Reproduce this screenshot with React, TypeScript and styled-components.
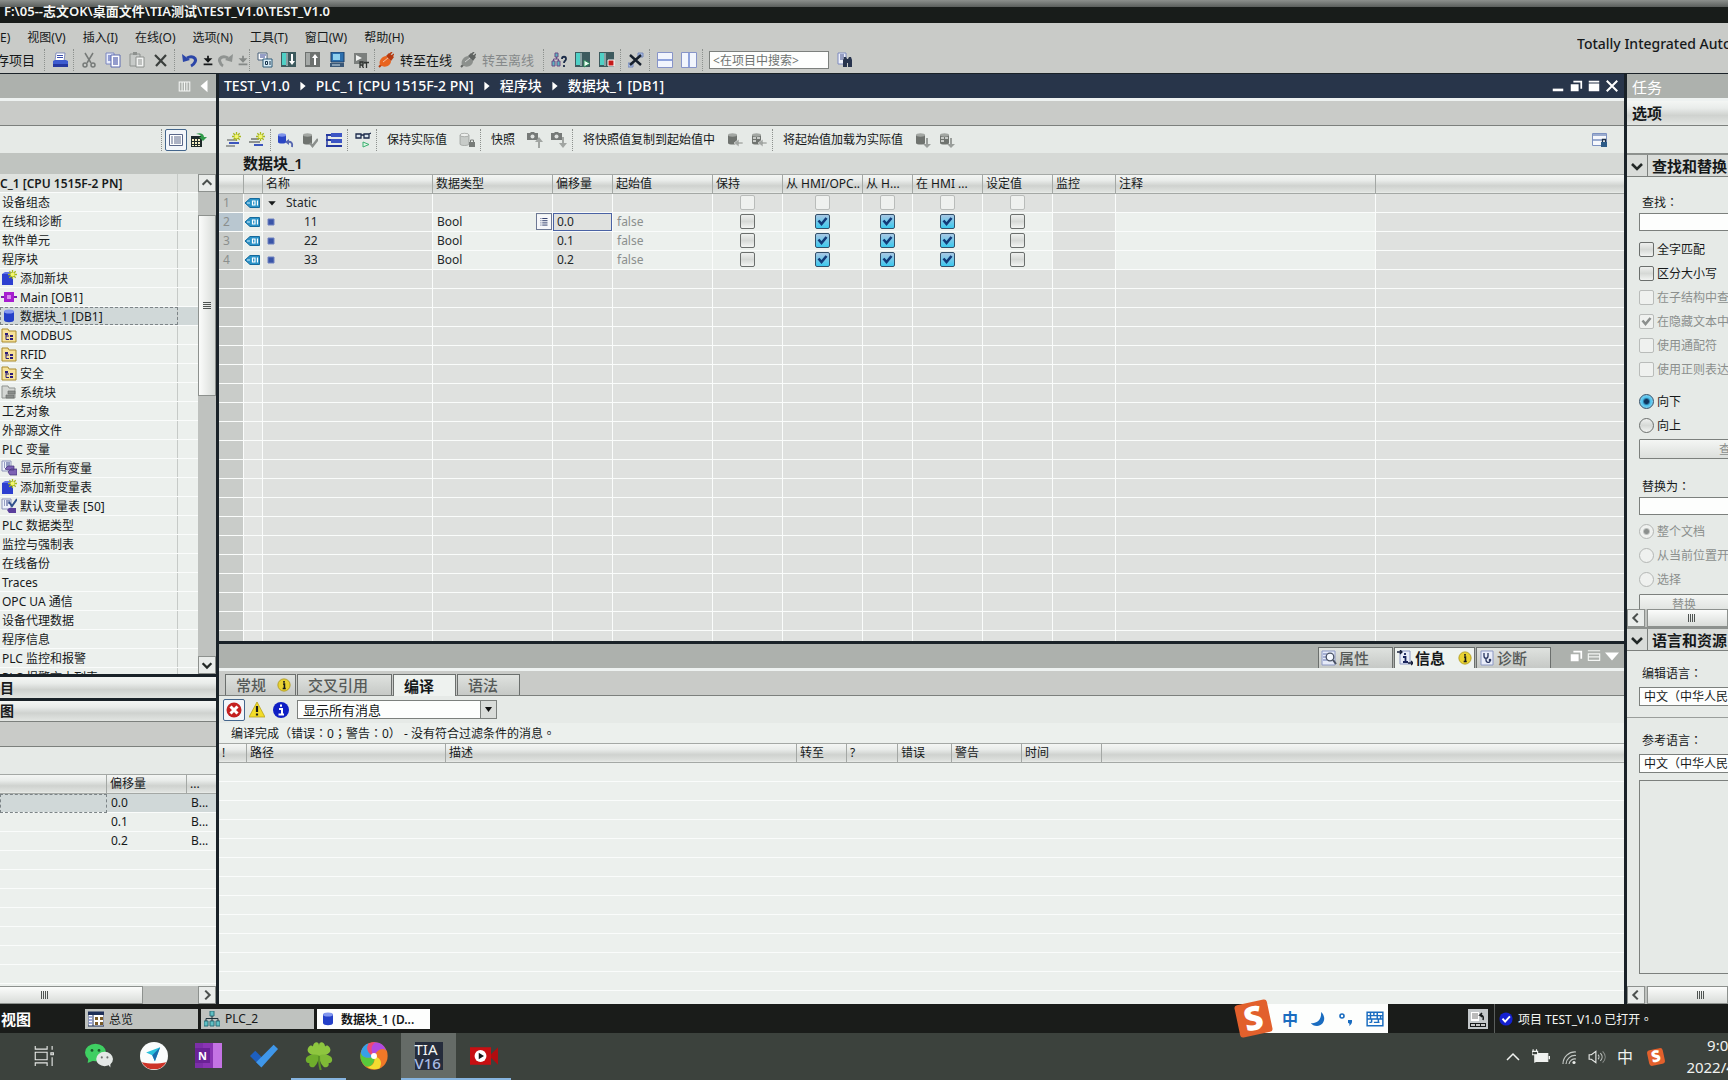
import React from "react";
import styled, { createGlobalStyle, css } from "styled-components";

const GlobalStyle = createGlobalStyle`
  *, *::before, *::after { box-sizing: border-box; }
  html, body { margin: 0; height: 100%; overflow: hidden; }
  body, button, input, select {
    font-family: "Noto Sans", "Noto Sans CJK SC", sans-serif;
    font-size: 12px;
    color: #16191a;
  }
  button { border: 0; padding: 0; margin: 0; background: none; cursor: pointer; }
  #root { height: 100%; }
`;

const ink = "#1a2228";
const line = "#7c807d";
const glossy = "linear-gradient(#f4f6f4, #e9ecea 30%, #cfd2cf 60%, #e2e5e2)";
const tick = (color: string) =>
  `url("data:image/svg+xml,%3Csvg xmlns='http://www.w3.org/2000/svg' viewBox='0 0 13 13'%3E%3Cpath d='M2.5 5.5l3 3.5 5-6' fill='none' stroke='%23${color}' stroke-width='2.6'/%3E%3C/svg%3E")`;

/* ---------- icons ---------- */

const disk = (fill: string, top: string) => (
  <>
    <path d="M3 3v9c0 3 10 3 10 0V3z" fill={fill} />
    <ellipse cx="8" cy="3.4" rx="5" ry="2" fill={top} />
  </>
);
const smallDisk = (
  <>
    <path d="M1 3v8c0 2 9 2 9 0V3z" fill="#6f736f" />
    <ellipse cx="5.500" cy="3" rx="4.500" ry="1.700" fill="#a3a7a3" />
  </>
);
const spark = (
  <path d="M11.500 0v9M7 4.500h9M8.300 1.300l6.400 6.400M14.700 1.300L8.300 7.700" stroke="#a9b81c" strokeWidth="1.300" />
);
const sparkCore = <circle cx="11.500" cy="4.500" r="2" fill="#f3f76b" />;
const folder = (
  <>
    <path d="M1 2h6l1 2h7v11H1z" fill="#f6e29a" stroke="#a98a2c" />
    <path d="M4 6h3v2H4zM9 8h3v2H9zM9 11h3v2H9z" fill="#2a1d7a" />
    <path d="M5 8v4.500h3M5 9h3" stroke="#2a1d7a" fill="none" />
  </>
);
const tagTable = (
  <>
    <path d="M1 1h9v10H1z" fill="#eef2fb" stroke="#8b93b8" />
    <path d="M3 3h1M5 3h4M3 5h1M5 5h4M3 7h1M5 7h2" stroke="#3c4a8a" />
  </>
);
const screenIcon = (
  <>
    <path d="M0 0h15v15H0z" fill="#3d5a5e" />
    <path d="M1 1h4v12H1z" fill="#4fd0c6" />
    <path d="M6 1v13" stroke="#d7e6e6" />
  </>
);
const plug = (a: string, b: string) => (
  <>
    <path d="M1 15l3-3" stroke={b} strokeWidth="2" />
    <path d="M2 13C0 8 5 4 8 4l5 5c0 4-5 7-9 5z" fill={a} />
    <path d="M8 4l3-3 5 4-3 4z" fill={b} />
    <path d="M11 3l3-3M13 5l3-3" stroke={b} strokeWidth="1.500" />
    <path d="M5 10l5-4" stroke="#fff" strokeOpacity=".6" />
  </>
);

const glyphs: Record<string, React.ReactNode> = {
  printer: (
    <>
      <path d="M4 1h9l-1 8H3z" fill="#fff" stroke="#6b78b5" strokeWidth=".8" />
      <path d="M5 3.500h6M5 5.500h6" stroke="#3b4fae" />
      <path d="M1 9l2-1h11l2 1v5H1z" fill="#3d5bd0" />
      <path d="M1 12h15v3H1z" fill="#2437a0" />
    </>
  ),
  cut: (
    <>
      <path d="M4 1l6 10M12 1L6 11" stroke="#767a78" strokeWidth="1.500" />
      <circle cx="4" cy="13" r="2" fill="none" stroke="#767a78" strokeWidth="1.500" />
      <circle cx="12" cy="13" r="2" fill="none" stroke="#767a78" strokeWidth="1.500" />
    </>
  ),
  copy: (
    <>
      <path d="M1 1h8v11H1z" fill="#e8ecfa" stroke="#7a86c0" />
      <path d="M3 4h4M3 6h4M3 8h4" stroke="#3b4fae" />
      <path d="M6 3h9v12H6z" fill="#fff" stroke="#5c6bb0" />
      <path d="M8 6h5M8 8h5M8 10h5M8 12h5" stroke="#28389a" />
    </>
  ),
  paste: (
    <>
      <path d="M1 2h10v12H1z" fill="#c7cac8" stroke="#8d918e" />
      <path d="M4 0h4v3H4z" fill="#8d918e" />
      <path d="M7 5h8v10H7z" fill="#f2f3f2" stroke="#8d918e" />
      <path d="M9 8h4M9 10h4M9 12h4" stroke="#8d918e" />
    </>
  ),
  remove: <path d="M2 3l11 11M13 3L3 14" stroke="#3b3f3d" strokeWidth="2.200" />,
  undo: (
    <>
      <path d="M5 6c5-3 10 0 8 4-.8 2-2 3-4 4" fill="none" stroke="#2c46a8" strokeWidth="3" />
      <path d="M0 2l1 8 7-2z" fill="#2c46a8" />
    </>
  ),
  redo: (
    <>
      <path d="M11 6C6 3 1 6 3 10c.5 2 1 3 3 4" fill="none" stroke="#8f9391" strokeWidth="3" />
      <path d="M16 2l-1 8-7-2z" fill="#8f9391" />
    </>
  ),
  drop: <path d="M7 3h2v3h4l-5 5-5-5h4zM3 12h10v2H3z" fill="#16191a" />,
  dropOff: <path d="M7 3h2v3h4l-5 5-5-5h4zM3 12h10v2H3z" fill="#858987" />,
  compile: (
    <>
      <path d="M1 1h9v7H1z" fill="#fff" stroke="#49617a" />
      <path d="M3 3h6M3 5h5" stroke="#2c3f8c" />
      <path d="M6 7h9v8H6z" fill="#d8ecf6" stroke="#2c5a78" />
      <path d="M8.500 9.500h2v3h-2zM13 9v4" stroke="#16324a" fill="none" />
    </>
  ),
  download: (
    <>
      {screenIcon}
      <path d="M11 2v8" stroke="#fff" strokeWidth="2" />
      <path d="M8 9h6l-3 4z" fill="#fff" />
    </>
  ),
  upload: (
    <>
      <path d="M0 0h15v15H0z" fill="#6d716f" />
      <path d="M1 1h4v12H1z" fill="#a5a9a7" />
      <path d="M10 5v8" stroke="#fff" strokeWidth="2" />
      <path d="M7 6h6l-3-4z" fill="#fff" />
    </>
  ),
  monitor: (
    <>
      <path d="M2 0h13v10H2z" fill="#2c6fae" stroke="#1d3f66" />
      <path d="M4 2h7v6H4z" fill="#8fd0ee" />
      <path d="M1 11h14v4H1z" fill="#3a5878" />
      <path d="M3 13h8" stroke="#cfe2ee" />
    </>
  ),
  runtime: (
    <>
      <path d="M1 1h13v11H1z" fill="#7b7f7d" />
      <path d="M3 3l6 3-6 3z" fill="#f0f2f1" />
      <path d="M7 16V10h3v3H7.500M9 13l1.500 3M11 10.500h5M13.500 10v6" stroke="#2f3331" strokeWidth="1.300" fill="none" />
    </>
  ),
  online: plug("#e8641f", "#b53a10"),
  offline: plug("#8c908d", "#5f6361"),
  devices: (
    <>
      <path d="M4 1h3v4H4zM1 9h3v5H1zM6 9h3v5H6z" fill="#5ab5c0" stroke="#6a4a86" />
      <path d="M5.500 5v2M2.500 9V7h5v2" stroke="#6a4a86" fill="none" />
      <path d="M11 7c0-3 4-3 4 0 0 2-2 1.500-2 4M13 13v2" stroke="#1b2b48" strokeWidth="1.800" fill="none" />
    </>
  ),
  start: (
    <>
      {screenIcon}
      <path d="M9 8l6 3.500L9 15z" fill="#eafaf0" stroke="#2c8a58" />
    </>
  ),
  stop: (
    <>
      {screenIcon}
      <path d="M9 8h6v6H9z" fill="#c41a1a" stroke="#fff" />
    </>
  ),
  crossRef: (
    <>
      <path d="M10 1h5v4h-5zM0 11h5v4H0z" fill="#a9bbe4" stroke="#7789b8" />
      <path d="M2 3l11 10M13 3L2 13" stroke="#17202c" strokeWidth="2.400" />
    </>
  ),
  splitH: (
    <>
      <path d="M.5.500h15v15H.5z" fill="#f2f5fd" stroke="#8794c8" />
      <path d="M1 7h14v2H1z" fill="#8fa3dc" />
    </>
  ),
  splitV: (
    <>
      <path d="M.5.500h15v15H.5z" fill="#f2f5fd" stroke="#8794c8" />
      <path d="M7 1h2v14H7z" fill="#8fa3dc" />
    </>
  ),
  find: (
    <>
      <path d="M1 1h8v11H1z" fill="#eef1fb" stroke="#7d8abf" />
      <path d="M3 3h4M3 5h4M3 7h3" stroke="#3c4a8a" />
      <path d="M6 8l1-3h2l1 2h1l1-2h2l1 3v7h-4v-4h-1v4H6z" fill="#28344e" />
    </>
  ),
  addRow: (
    <>
      <path d="M2 7h9v2H2zM1 13h9v2H1z" fill="#9a9e9c" />
      <path d="M4 10h10v2H4z" fill="#3c55bd" />
      {spark}
      {sparkCore}
    </>
  ),
  insertRow: (
    <>
      <path d="M2 6h8v2H2zM0 9h11v2H0z" fill="#8d918f" />
      <path d="M5 12h9v2H5z" fill="#3c55bd" />
      {spark}
      {sparkCore}
    </>
  ),
  resetDb: (
    <>
      <path d="M0 3v7c0 2 8 2 8 0V3z" fill="#2b46c4" />
      <ellipse cx="4" cy="3" rx="4" ry="1.700" fill="#7d92ea" />
      <path d="M9 10c4-1 6 1 5 5" fill="none" stroke="#5767b0" strokeWidth="2" />
      <path d="M7 10l4-3v6z" fill="#5767b0" />
    </>
  ),
  checkDb: (
    <>
      {smallDisk}
      <path d="M8 11l2.500 3L16 7" fill="none" stroke="#8b8f8c" strokeWidth="2.400" />
    </>
  ),
  expand: (
    <>
      <path d="M0 2h6v2H0zM0 7h6v2H0zM0 13h16v2H0z" fill="#2438a0" />
      <path d="M1 4v9" stroke="#2438a0" strokeWidth="1.500" />
      <path d="M5 1h11v4H5zM5 7h11v4H5z" fill="#3c55c4" />
    </>
  ),
  glasses: (
    <>
      <path d="M1 2h5v4H1zM9 2h5v4H9zM6 3h3M14 2l2-1" fill="#d9e4ee" stroke="#1c2a4a" strokeWidth="1.300" />
      <path d="M8 10l6 2.500L8 15z" fill="#dff5e6" stroke="#3ab070" />
    </>
  ),
  lockDb: (
    <>
      <path d="M1 3v9c0 2 9 2 9 0V3z" fill="#c7cbc8" stroke="#8b8f8c" strokeWidth=".6" />
      <ellipse cx="5.500" cy="3" rx="4.500" ry="1.700" fill="#eef0ee" stroke="#8b8f8c" strokeWidth=".6" />
      <path d="M10 10h6v5h-6z" fill="#777b78" />
      <path d="M11.500 10V8h3v2" stroke="#777b78" fill="none" />
    </>
  ),
  snapUp: (
    <>
      <path d="M0 1h3l1-1h3l1 1h3v7H0z" fill="#767a78" />
      <circle cx="5.500" cy="4.500" r="2" fill="#dfe2e0" />
      <path d="M8 10h3v6h2v-6h3l-4-5z" fill="#a1a5a2" />
    </>
  ),
  snapDown: (
    <>
      <path d="M0 1h3l1-1h3l1 1h3v7H0z" fill="#767a78" />
      <circle cx="5.500" cy="4.500" r="2" fill="#dfe2e0" />
      <path d="M8 11h3V5h2v6h3l-4 5z" fill="#a1a5a2" />
    </>
  ),
  copyAll: (
    <>
      {smallDisk}
      <path d="M16 10h-4V7l-5 4 5 4v-3h4z" fill="#a1a5a2" stroke="#eceeec" strokeWidth=".6" />
    </>
  ),
  copySome: (
    <>
      {smallDisk}
      <path d="M2 6h3M6 6h3M2 9h3" stroke="#e5e8e5" strokeWidth="1.500" />
      <path d="M16 10h-4V7l-5 4 5 4v-3h4z" fill="#a1a5a2" stroke="#eceeec" strokeWidth=".6" />
    </>
  ),
  loadAll: (
    <>
      {smallDisk}
      <path d="M11 6h2v6h3l-4 4-4-4h3z" fill="#9a9e9b" />
    </>
  ),
  loadSome: (
    <>
      {smallDisk}
      <path d="M2 6h3M6 6h3M2 9h3" stroke="#e5e8e5" strokeWidth="1.500" />
      <path d="M11 6h2v6h3l-4 4-4-4h3z" fill="#9a9e9b" />
    </>
  ),
  keepLayout: (
    <>
      <path d="M.5 1.500h14v12H.5z" fill="#f6f8fc" stroke="#7d92c0" />
      <path d="M1 3h13M1 8h9" stroke="#7d92c0" strokeWidth="1.500" />
      <path d="M9 10h6v5H9z" fill="#2d5a86" />
      <path d="M10.500 10V7.500h3V10" stroke="#1d3048" fill="none" strokeWidth="1.300" />
    </>
  ),
  listView: (
    <>
      <path d="M1.500 2.500h13v11h-13z" fill="#fff" stroke="#5a678a" />
      <path d="M3 5h2M6 5h7M3 7h2M6 7h7M3 9h2M6 9h7M3 11h2M6 11h7" stroke="#5a678a" />
    </>
  ),
  exportTable: (
    <>
      <path d="M0 4h11v11H0z" fill="#1d2a2a" />
      <path d="M1 7h2v2H1zM4 7h2v2H4zM7 7h2v2H7zM1 10h2v2H1zM4 10h2v2H4zM7 10h2v2H7zM1 13h2v1H1zM4 13h2v1H4zM7 13h2v1H7z" fill="#f5efc4" />
      <path d="M5 2c4-2 8 0 8 3h3l-4 4-4-4h2c0-2-2-3-5-3z" fill="#2f9a4a" />
    </>
  ),
  addBlock: (
    <>
      <path d="M1 4h11v11H1z" fill="#2c3fd0" />
      <path d="M1 4l3-2h8v2z" fill="#5f72ea" />
      {spark}
      {sparkCore}
    </>
  ),
  orgBlock: (
    <>
      <path d="M0 7h16v2H0z" fill="#7a1fae" />
      <path d="M3 3h10v10H3z" fill="#a71fd0" />
      <path d="M6 6h4v4H6z" fill="#d98aee" />
    </>
  ),
  db: disk("#2440c8", "#8398ee"),
  folder,
  sysFolder: (
    <>
      <path d="M1 2h6l1 2h6v10H1z" fill="#d3d6d3" stroke="#8f9390" />
      <path d="M7 7h7v3H7zM5 11h8v3H5z" fill="#8b8f8c" stroke="#6b6f6c" strokeWidth=".7" />
    </>
  ),
  showTags: (
    <>
      {tagTable}
      <path d="M4 9l3-3h6v4H7zM7 12l3-3h6v6H9z" fill="#7c62b4" stroke="#43307a" strokeWidth=".7" />
    </>
  ),
  defaultTags: (
    <>
      {tagTable}
      <path d="M6 12l2-2h7v5H8z" fill="#5a3f9c" />
      <path d="M8 4l3 4 5-7" fill="none" stroke="#31508c" strokeWidth="2" />
    </>
  ),
  tag: (
    <>
      <path d="M1 8l5-4.500h9.500v9H6z" fill="#2a93c8" stroke="#166a9c" />
      <path d="M8.500 6h2.500v4H8.500zM13.500 5.500v5" stroke="#fff" strokeWidth="1.200" fill="none" />
      <path d="M3 8h3" stroke="#d8f0fa" />
    </>
  ),
  open: <path d="M2 5h12l-6 7z" fill="#16191a" />,
  item: <path d="M5 5h6v6H5z" fill="#3a55a8" stroke="#6f82c0" />,
  picker: (
    <>
      <path d="M0 0h16v16H0z" fill="#f6f7fa" />
      <path d="M4 4h1M6 4h6M4 6.500h1M6 6.500h6M4 9h1M6 9h6M4 11.500h1M6 11.500h6" stroke="#1b2a5c" />
    </>
  ),
  properties: (
    <>
      <path d="M1 1h13v14H1z" fill="#e5eaf8" stroke="#8c98c4" />
      <path d="M2 4h4M2 7h3M2 10h4" stroke="#6474b0" />
      <circle cx="9" cy="7" r="3.800" fill="#f4f8ff" stroke="#4a5264" strokeWidth="1.300" />
      <path d="M12 10l3 4" stroke="#4a5264" strokeWidth="2" />
    </>
  ),
  infoDoc: (
    <>
      <path d="M3 1h10v13H3z" fill="#e9edf9" stroke="#8c98c4" />
      <path d="M8 3v2M6 7h2.500v5M6 12h5" stroke="#18245c" strokeWidth="1.800" fill="none" />
      <path d="M0 2h5M3 0l2 2-2 2M11 13h5M14 11l2 2-2 2" stroke="#18203c" strokeWidth="1.300" fill="none" />
    </>
  ),
  diagnose: (
    <>
      <path d="M2 1h12v14H2z" fill="#e9edf9" stroke="#8c98c4" />
      <path d="M5 3v3c0 3 4 3 4 0V3M7 8v2c0 3 4 3 4 1" stroke="#27345e" strokeWidth="1.300" fill="none" />
      <circle cx="11" cy="10" r="1.300" fill="#27345e" />
    </>
  ),
  infoYellow: (
    <>
      <circle cx="8" cy="8" r="7" fill="#e9d232" stroke="#b09a18" />
      <path d="M8 3.500v2M7 7h1.500v4.500M6.500 12h3.500" stroke="#16191a" strokeWidth="1.800" fill="none" />
    </>
  ),
  error: (
    <>
      <circle cx="8" cy="8" r="7.500" fill="#c42020" />
      <path d="M4.500 4.500l7 7M11.500 4.500l-7 7" stroke="#fff" strokeWidth="3" />
    </>
  ),
  warning: (
    <>
      <path d="M8 0l8 15H0z" fill="#f2dc28" stroke="#b8a21a" strokeWidth=".8" />
      <path d="M8 4v6M8 11.500v2" stroke="#16191a" strokeWidth="2.200" />
    </>
  ),
  info: (
    <>
      <circle cx="8" cy="8" r="8" fill="#0f1fc4" />
      <path d="M8 2.500v2.200M6 7h3v5M5.500 12.500h5.500" stroke="#fff" strokeWidth="2" fill="none" />
    </>
  ),
  min: <path d="M2 11h12v3H2z" fill="#fff" />,
  restore: (
    <>
      <path d="M5 3h9v8" stroke="#fff" strokeWidth="2" fill="none" />
      <path d="M2 6h9v8H2z" fill="#fff" />
    </>
  ),
  max: <path d="M2 2h12v2H2zM2 5h12v9H2z" fill="#fff" />,
  lines: <path d="M1 2h14M1 5.500h14M1 9h14M1 13h14M1.500 5v8M14.500 5v8" stroke="#f4f6f4" strokeWidth="1.300" />,
  close: <path d="M2 2l12 12M14 2L2 14" stroke="#fff" strokeWidth="2.300" />,
  caretDown: <path d="M0 4h16l-8 9z" fill="#fff" />,
  caretLeft: <path d="M12 1v14L4 8z" fill="#fff" />,
  crumb: <path d="M5 3l6 5-6 5z" fill="#fff" />,
  columns: <path d="M1.500 2.500h13v11h-13zM5 3v10M8 3v10M11 3v10" stroke="#f4f6f4" strokeWidth="1.300" fill="none" />,
  chevDown: <path d="M3 6l5 5 5-5" stroke="#222826" strokeWidth="2.600" fill="none" />,
  chevUp: <path d="M3 10l5-5 5 5" stroke="#4b504e" strokeWidth="2.400" fill="none" />,
  chevLeft: <path d="M10 3L5 8l5 5" stroke="#4b504e" strokeWidth="2.400" fill="none" />,
  chevRight: <path d="M6 3l5 5-5 5" stroke="#4b504e" strokeWidth="2.400" fill="none" />,
  gripV: <path d="M4 4.500h8M4 6.500h8M4 8.500h8M4 10.500h8" stroke="#4f5452" />,
  gripH: <path d="M4.500 4v8M6.500 4v8M8.500 4v8M10.500 4v8" stroke="#4f5452" />,
  overview: (
    <>
      <path d="M0 1h16v14H0z" fill="#fff" stroke="#1d2f58" />
      <path d="M0 1h16v3H0z" fill="#1d2f58" />
      <path d="M5 4v11" stroke="#1d2f58" />
      <path d="M1 6h3M1 9h3M1 12h3" stroke="#3c55bd" />
      <path d="M7 6h3v3H7zM12 6h3v3h-3zM7 11h3v3H7zM12 11h3v3h-3z" fill="#7a5c28" />
    </>
  ),
  network: (
    <>
      <path d="M6 0h4v5H6zM0 10h4v5H0zM6 10h4v5H6zM12 10h4v5h-4z" fill="#5fc0c4" stroke="#2c6f78" />
      <path d="M8 5v5M2 10V7.500h12V10" stroke="#1d2f38" fill="none" />
    </>
  ),
  statusDoc: (
    <>
      <path d="M1 1h8v9H1z" fill="#fff" />
      <path d="M2 3h6M2 5h6M2 7h6" stroke="#777" />
      <path d="M13 9c1-4-1-5-3-5l2-2M10 4l2 2" stroke="#16191a" strokeWidth="1.500" fill="none" />
      <path d="M0 12h16v4H0z" fill="#16191a" />
      <path d="M1 14h4M6 14h4M11 14h4" stroke="#fff" strokeWidth="1.500" />
    </>
  ),
  ok: (
    <>
      <circle cx="8" cy="8" r="7.500" fill="#1420d0" />
      <path d="M4 7.500l3 3.500 5.500-6" stroke="#fff" strokeWidth="2.200" fill="none" />
    </>
  ),
  moon: <path d="M11 1c6 5 3 14-4 14-3 0-5-1-6-3 6 1 11-4 10-11z" fill="#1a6cc0" />,
  punct: (
    <>
      <circle cx="4" cy="5" r="2" fill="none" stroke="#1a6cc0" strokeWidth="1.600" />
      <path d="M10 9h4c.5 3-1 5-3 6 1-2 .5-3-1-3z" fill="#1a6cc0" />
    </>
  ),
  keyboard: (
    <path
      d="M1 2h14v12H1zM1 5h14M4 2v6M7 2v3M10 2v6M13 5v3M1 8h14M3 11h2M7 11h5M5 8v3M11 8v3"
      stroke="#1a6cc0"
      strokeWidth="1.300"
      fill="none"
    />
  ),
  taskView: (
    <path
      d="M1 0v2.500h9.500V0M1 16v-2.500h9.500V16M1 5h9.500v6H1zM14.500 0v3M14.500 9v7M13.500 5.500h2v1.500h-2z"
      stroke="#e6e8e6"
      strokeWidth=".9"
      fill="none"
    />
  ),
  wechat: (
    <>
      <ellipse cx="6" cy="6" rx="6" ry="5" fill="#3fcf62" />
      <path d="M2 9l-.5 3L5 10.500z" fill="#3fcf62" />
      <circle cx="4" cy="4.800" r=".8" fill="#1c5c2c" />
      <circle cx="8" cy="4.800" r=".8" fill="#1c5c2c" />
      <ellipse cx="11.200" cy="9.700" rx="4.800" ry="4.100" fill="#e4e8e6" />
      <path d="M13 12.500l1.500 2v-3z" fill="#e4e8e6" />
      <circle cx="9.600" cy="8.800" r=".6" fill="#6c706e" />
      <circle cx="12.800" cy="8.800" r=".6" fill="#6c706e" />
    </>
  ),
  compass: (
    <>
      <circle cx="8" cy="8" r="8" fill="#fafcfc" />
      <path d="M1 11.500c4 1 10 1 14 0A8 8 0 0 1 1 11.500z" fill="#cc3328" />
      <path d="M3.500 6l8-3-3 8-1.500-3.500z" fill="#28c0dc" />
      <path d="M11.500 3L7 7.500 8.500 11z" fill="#1a6cae" />
    </>
  ),
  todo: (
    <>
      <path d="M0 8l3-3 5 5-3 3z" fill="#1d5fc0" />
      <path d="M3.500 11.500L13.500 1.500 16 4 6.500 14.500z" fill="#3f97ea" />
    </>
  ),
  clover: (
    <>
      <path d="M8 8C4 8 0 6 2 3c1-1.500 2-1 2.500-.5C5-.5 8-.5 8 2c0-2.500 3-2.500 3.500.5.500-.5 1.500-1 2.500.5 2 3-2 5-6 5z" fill="#8ec63f" />
      <path d="M8 7.500c-3-1-8 0-7.500 3 .3 1.500 1.500 1.500 2 1.500-.5 2.500 2 3 3 2C7 12.500 8 10 8 7.500z" fill="#6fae2c" />
      <path d="M8 7.500c3-1 8 0 7.500 3-.3 1.500-1.500 1.500-2 1.500.5 2.500-2 3-3 2C9 12.500 8 10 8 7.500z" fill="#7fba36" />
      <path d="M8 8c0 3 0 5 1 8" stroke="#5a9424" strokeWidth="1.200" fill="none" />
    </>
  ),
  pinwheel: (
    <>
      <circle cx="8" cy="8" r="7.800" fill="#f07828" />
      <path d="M8 8C5 5 6 1 8 .2c4 0 6 2 7 4.800-2-2-5-1-7 3z" fill="#b04ae0" />
      <path d="M8 8c4 1 5 4 3 7.200-3 1-6 0-7-1.200 3 0 5-2 4-6z" fill="#f4dc30" />
      <path d="M8 8c1 4-2 7-5 5.800C0 11 0 8 .5 6 2 9 5 10 8 8z" fill="#58c83c" />
      <path d="M8 8C5 10 1 9 .5 6 1 3 3 1 5 .8 3 4 5 7 8 8z" fill="#38a0e8" />
      <path d="M8 8C5 7 3 4 5 .8 7 0 8 0 9 .2 6 2 6 5 8 8z" fill="#ec4878" />
      <circle cx="8" cy="8" r="1.700" fill="#fff" />
    </>
  ),
  recorder: (
    <>
      <path d="M0 3h12v10H0z" fill="#c80f12" />
      <path d="M12 7l4-4v10l-4-4z" fill="#b00d10" />
      <circle cx="6" cy="8" r="3.400" fill="#fff" />
      <path d="M5 6.200L8 8 5 9.800z" fill="#16191a" />
    </>
  ),
  trayUp: <path d="M2 11l6-6 6 6" stroke="#f0f2f0" strokeWidth="1.500" fill="none" />,
  battery: (
    <>
      <path d="M3 5h11v7H3z" fill="#f0f2f0" stroke="#f0f2f0" />
      <path d="M15.500 7v3" stroke="#f0f2f0" strokeWidth="1.500" />
      <path d="M0 3h5v3H0zM1 1v2M4 1v2M2.500 6v7" stroke="#f0f2f0" fill="#3c423d" />
    </>
  ),
  wifi: (
    <>
      <path d="M2 15A12 12 0 0 1 15 3M5 15A9 9 0 0 1 15 6.500M8 15A6 6 0 0 1 15 10" stroke="#c3c7c4" strokeWidth="1.200" fill="none" />
      <circle cx="13" cy="13.500" r="1.600" fill="#e8eae8" />
    </>
  ),
  sound: (
    <>
      <path d="M1 6h2l4-3v10l-4-3H1z" stroke="#e8eae8" fill="none" />
      <path d="M9 6c1 1 1 3 0 4M11 4.500c2 2 2 5 0 7" stroke="#c3c7c4" fill="none" />
      <path d="M13 3c3 3 3 7 0 10" stroke="#888c89" fill="none" />
    </>
  ),
};

const Svg = styled.svg<{ $size: number }>`
  display: block;
  flex: none;
  width: ${(p) => p.$size}px;
  height: ${(p) => p.$size}px;
`;

const Icon = ({ name, size = 16 }: { name: string; size?: number }) => (
  <Svg $size={size} viewBox="0 0 16 16" aria-hidden="true">
    {glyphs[name]}
  </Svg>
);

/* ---------- shared parts ---------- */

const Window = styled.div`
  height: 100%;
  display: flex;
  flex-direction: column;
  background: ${ink};
  overflow: hidden;
  white-space: nowrap;
`;

/* full-width punctuation drawn in the middle of its box */
const Mid = styled.span`
  font-family: "Noto Sans CJK TC", sans-serif;
`;

const TitleBar = styled.header`
  flex: none;
  height: 23px;
  padding: 7px 0 0 4px;
  background: linear-gradient(#8b8f8c, #5a5e5c 7px, #181c1a 7px);
  color: #f4f6f4;
  font-size: 13px;
  font-weight: 600;
  line-height: 8px;
`;

const Commands = styled.div`
  flex: none;
  display: flex;
  justify-content: space-between;
  height: 50px;
  background: #c9cbc8;
`;

const Brand = styled.div`
  flex: none;
  width: 151px;
  padding-top: 10px;
  overflow: hidden;
  font-size: 14px;
  font-weight: 500;
  line-height: 22px;
`;

const MenuBar = styled.nav`
  display: flex;
  align-items: center;
  height: 26px;
  padding-top: 3px;
  gap: 17px;
`;

const MenuItem = styled.button`
  font-size: 12px;
  line-height: 20px;
`;

const Row = styled.div`
  display: flex;
  align-items: center;
`;

const MainTools = styled(Row)`
  height: 22px;
  margin-left: -4px;
`;

const Tool = styled.button<{ $slim?: boolean; $on?: boolean }>`
  display: flex;
  flex: none;
  align-items: center;
  justify-content: center;
  width: ${(p) => (p.$slim ? 11 : 24)}px;
  height: 22px;
  ${(p) =>
    p.$on &&
    css`
      width: 22px;
      border: 1px solid #44668c;
      border-radius: 2px;
      background: #f3f6fa;
    `}
`;

const TextTool = styled.button<{ $off?: boolean }>`
  display: flex;
  flex: none;
  align-items: center;
  gap: 6px;
  padding-right: 8px;
  font-size: 13px;
  line-height: 20px;
  color: ${(p) => (p.$off ? "#85898a" : "#16191a")};
`;

const ToolLabel = styled.span`
  padding: 0 8px 0 7px;
  line-height: 20px;
`;

const Sep = styled.span`
  flex: none;
  width: 1px;
  height: 22px;
  margin: 0 3px 0 1px;
  border-left: 1px dotted #8d918e;
`;

const Search = styled.input`
  width: 120px;
  height: 18px;
  margin: 0 4px 0 3px;
  padding: 0 3px;
  border: 1px solid ${line};
  background: #fdfefd;
  &::placeholder { color: #6f7371; opacity: 1; }
`;

const Work = styled.main`
  flex: 1;
  min-height: 0;
  display: grid;
  grid-template-columns: 216px minmax(0, 1fr) 101px;
  gap: 3px;
  padding-top: 1px;
  background: ${ink};
`;

const Column = styled.section`
  display: flex;
  flex-direction: column;
  min-width: 0;
  min-height: 0;
  overflow: hidden;
`;

const PanelHead = styled.div<{ $main?: boolean }>`
  flex: none;
  display: flex;
  align-items: center;
  height: 27px;
  padding: 0 5px;
  border-bottom: 3px solid #eef2f1;
  background: ${(p) => (p.$main ? "#28354a" : "#adb1ad")};
  color: #fff;
  font-size: 15px;
`;

const Strip = styled.div`
  flex: none;
  display: flex;
  align-items: flex-end;
  height: 25px;
  background: #c9cbc8;
  border-bottom: 1px solid ${line};
`;

const ToolStrip = styled(Row)<{ $end?: boolean; $inset?: boolean }>`
  flex: none;
  height: 27px;
  padding-left: ${(p) => (p.$inset ? 4 : 2)}px;
  background: #e6eae7;
  ${(p) => p.$end && "justify-content: flex-end; padding-right: 5px;"}
`;

const Push = styled.span`
  flex: 1;
`;

const Sheet = styled.div<{ $bg: string }>`
  flex: 1;
  min-height: 0;
  overflow: hidden;
  background: ${(p) => p.$bg};
`;

const Grid = styled.table`
  width: 100%;
  table-layout: fixed;
  border-collapse: separate;
  border-spacing: 0;
`;

const Th = styled.th`
  height: 20px;
  padding: 0 0 1px 3px;
  overflow: hidden;
  text-align: left;
  font-size: 12px;
  font-weight: 400;
  line-height: 16px;
  background: ${glossy};
  border-top: 1px solid #a4a8a5;
  border-right: 1px solid #a4a8a5;
  border-bottom: 1px solid #a4a8a5;
  box-shadow: inset 0 -1px 0 #e6e9e6;
  &:last-child { border-right: 0; }
`;

/* ---------- scroll bars ---------- */

const ScrollButton = styled.button`
  flex: none;
  display: flex;
  align-items: center;
  justify-content: center;
  width: 18px;
  height: 18px;
  border: 1px solid #8d918e;
  background: #e9ecea;
`;

const VTrack = styled.div`
  flex: none;
  display: flex;
  flex-direction: column;
  width: 18px;
  background: #bfc2bf;
`;

const VThumb = styled.div`
  display: flex;
  align-items: center;
  justify-content: center;
  height: 181px;
  margin-top: 23px;
  border: 1px solid #8d918e;
  background: linear-gradient(90deg, #fbfcfb, #d9dcd9);
`;

const HTrack = styled.div`
  flex: none;
  display: flex;
  gap: 2px;
  height: 18px;
  background: #bfc2bf;
`;

const HThumb = styled.div<{ $width?: number; $grip: number }>`
  display: flex;
  align-items: center;
  ${(p) => (p.$width ? `width: ${p.$width}px;` : "flex: 1;")}
  padding-left: ${(p) => p.$grip}px;
  border: 1px solid #8d918e;
  border-left-width: ${(p) => (p.$width ? 0 : 1)}px;
  background: linear-gradient(#fbfcfb, #d9dcd9);
`;

/* ---------- project tree ---------- */

const TreeArea = styled.div`
  flex: 1;
  min-height: 0;
  display: flex;
  background: #e4e8e5;
`;

const Tree = styled.ul`
  flex: 1;
  min-width: 0;
  margin: 0;
  padding: 0;
  overflow: hidden;
  list-style: none;
  background: #ecf0ed;
`;

const Leaf = styled.li<{ $kind?: string }>`
  display: flex;
  height: 19px;
  border-bottom: 1px solid #fafcfb;
  background: ${(p) => (p.$kind === "sel" ? "#d0d8d8" : p.$kind === "head" ? "#dfe2df" : "#ecf0ed")};
  font-weight: ${(p) => (p.$kind === "head" ? 600 : 400)};
`;

const LeafText = styled.button<{ $sel?: boolean; $head?: boolean; $icon?: boolean }>`
  display: flex;
  align-items: center;
  width: 178px;
  padding-left: ${(p) => (p.$head ? 0 : p.$icon ? 1 : 2)}px;
  gap: 3px;
  font-weight: inherit;
  line-height: 17px;
  border-right: 1px solid #c6cac7;
  ${(p) => p.$sel && "outline: 1px dashed #7c8487; outline-offset: -1px;"}
`;

const Bar = styled.button<{ $ruled?: boolean }>`
  flex: none;
  height: 21px;
  width: 100%;
  text-align: left;
  font-size: 14px;
  font-weight: 700;
  line-height: 18px;
  background: ${glossy};
  ${(p) => p.$ruled && `border-bottom: 1px solid ${line};`}
`;

const Stack = styled.div<{ $fill?: boolean }>`
  display: flex;
  flex-direction: column;
  min-height: 0;
  flex: ${(p) => (p.$fill ? "1" : "none")};
`;

const LeftColumn = styled(Column)`
  gap: 3px;
`;

const Spacer = styled.div`
  flex: none;
  height: 21px;
  background: #c0c4c0;
`;

const Details = styled(Stack)`
  height: 303px;
`;

const DetailCell = styled.td<{ $sel?: boolean; $focus?: boolean }>`
  height: 19px;
  padding: 0 0 1px 4px;
  line-height: 16px;
  border-bottom: 1px solid #fafcfb;
  background: ${(p) => (p.$sel ? "#d0d8d8" : "#ecf0ed")};
  ${(p) => p.$focus && "outline: 1px dashed #7c8487; outline-offset: -1px;"}
`;

/* ---------- block editor ---------- */

const Crumbs = styled.nav`
  display: flex;
  align-items: center;
  gap: 6px;
`;

const Crumb = styled.a`
  color: #fff;
  text-decoration: none;
  font-size: 14px;
  font-weight: 500;
  line-height: 20px;
`;

const BlockTitle = styled.h1`
  flex: none;
  height: 21px;
  margin: 0;
  padding-left: 24px;
  background: #d6d9d6;
  font-size: 15px;
  font-weight: 600;
  line-height: 20px;
`;

const Td = styled.td<{ $bg?: string; $center?: boolean; $dim?: boolean; $focus?: boolean }>`
  height: 19px;
  padding: 0 0 1px ${(p) => (p.$center ? 0 : 4)}px;
  border-right: 1px solid #fafcfb;
  border-bottom: 1px solid #fafcfb;
  background: ${(p) => p.$bg ?? "#dfe1df"};
  color: ${(p) => (p.$dim ? "#8b8f8d" : "#24282a")};
  line-height: 16px;
  ${(p) => p.$focus && "box-shadow: inset 0 0 0 1px #4a62a4;"}
  &:last-child { border-right: 0; }
`;

const CellLine = styled.div<{ $between?: boolean }>`
  display: flex;
  align-items: center;
  height: 17px;
  gap: 5px;
  ${(p) => p.$between && "justify-content: space-between;"}
`;

const Indent = styled.span<{ $w: number }>`
  padding-left: ${(p) => p.$w}px;
`;

const Pick = styled.button`
  width: 16px;
  height: 17px;
  border: 1px solid #6d7894;
`;

const Check = styled.input`
  appearance: none;
  display: block;
  flex: none;
  width: 15px;
  height: 15px;
  margin: 0 auto;
  border: 1px solid #6b6f6d;
  border-radius: 2px;
  background: linear-gradient(#eef0ee, #d6d9d6 50%, #f2f4f2);
  &:checked { border-color: #33506a; background: ${tick("123a78")}, linear-gradient(#a9c8e4, #3cc8ee); }
  &:disabled { border-color: #b9bcba; background: #eff1ef; }
  &:disabled:checked { background: ${tick("8b8f8d")}, #eff1ef; }
`;

/* ---------- inspector ---------- */

const Inspector = styled(Stack)`
  height: 363px;
  border-top: 3px solid ${ink};
`;

const InspectorHead = styled(PanelHead)`
  align-items: flex-end;
`;

const Tab = styled.button<{ $on?: boolean; $w: number }>`
  display: flex;
  align-items: center;
  gap: 2px;
  width: ${(p) => p.$w}px;
  height: 21px;
  padding: 0 2px;
  border: 1px solid #6b6f6d;
  border-bottom: 0;
  background: ${(p) => (p.$on ? "#eef2ef" : "linear-gradient(#dfe2df, #c6c9c6)")};
  font-size: 15px;
  font-weight: ${(p) => (p.$on ? 700 : 500)};
  color: ${(p) => (p.$on ? "#16191a" : "#565a58")};
  line-height: 18px;
`;

const SubTab = styled(Tab)`
  height: ${(p) => (p.$on ? 22 : 21)}px;
  margin-bottom: ${(p) => (p.$on ? -1 : 0)}px;
  padding-left: 10px;
  gap: 11px;
`;

const TabRow = styled.div`
  display: flex;
  align-items: flex-end;
  gap: 1px;
`;

const SubTabs = styled(TabRow)`
  padding-left: 6px;
`;

const WindowTools = styled(Row)<{ $gap: number }>`
  gap: ${(p) => p.$gap}px;
  height: 24px;
`;

const HeadTool = styled.button`
  display: flex;
`;

const TabGap = styled.span<{ $w: number }>`
  width: ${(p) => p.$w}px;
`;

const Filter = styled.select`
  appearance: none;
  width: 200px;
  height: 19px;
  margin-left: 4px;
  padding: 0 5px;
  border: 1px solid ${line};
  border-radius: 0;
  background:
    url("data:image/svg+xml,%3Csvg xmlns='http://www.w3.org/2000/svg' viewBox='0 0 16 17'%3E%3Cpath d='M0 0h16v17H0z' fill='%23d9dcd9'/%3E%3Cpath d='M.5 0v17' stroke='%237c807d'/%3E%3Cpath d='M5 6h7l-3.500 5z' fill='%23111'/%3E%3C/svg%3E") right / 16px 17px no-repeat,
    #fdfefd;
  font-size: 13px;
  line-height: 16px;
`;

const Message = styled.p`
  flex: none;
  height: 20px;
  margin: 0;
  padding-left: 12px;
  background: #ecf0ed;
  line-height: 20px;
`;

/* ---------- task cards ---------- */

const OptionsHead = styled.h2`
  flex: none;
  height: 25px;
  margin: 0;
  padding-left: 5px;
  border-bottom: 1px solid ${line};
  background: ${glossy};
  font-size: 15px;
  font-weight: 600;
  line-height: 24px;
`;

const Fold = styled.button`
  flex: none;
  display: flex;
  align-items: center;
  height: 24px;
  border-top: 2px solid #8d918e;
  border-bottom: 1px solid ${line};
  background: #d9dcd9;
  font-size: 15px;
  font-weight: 700;
  line-height: 20px;
`;

const FoldMark = styled.span`
  display: flex;
  align-items: center;
  height: 21px;
  width: 21px;
  margin-right: 4px;
  padding-left: 2px;
  border-right: 1px solid ${line};
`;

const FindCard = styled.form`
  flex: 1;
  min-height: 0;
  width: 208px;
  overflow: hidden;
  padding: 14px 12px 0;
  background: #e6eae7;
`;

const FieldLabel = styled.label`
  display: block;
  height: 22px;
  padding: 1px 3px 0;
  line-height: 20px;
`;

const Field = styled.input`
  display: block;
  width: 184px;
  height: 18px;
  border: 1px solid ${line};
  background: #fdfefd;
`;

const Options = styled.div<{ $top: number; $bottom: number }>`
  padding: ${(p) => p.$top}px 0 ${(p) => p.$bottom}px;
`;

const Option = styled.label<{ $off?: boolean }>`
  display: flex;
  align-items: center;
  gap: 3px;
  height: 24px;
  color: ${(p) => (p.$off ? "#8b8f8d" : "#16191a")};
  & > input { margin: 0; }
`;

const Radio = styled.input`
  appearance: none;
  flex: none;
  width: 15px;
  height: 15px;
  border: 1px solid #6b6f6d;
  border-radius: 50%;
  background: linear-gradient(#eef0ee, #d6d9d6 50%, #f2f4f2);
  &:checked { border-color: #33506a; background: radial-gradient(circle, #10345c 0 2px, #4cc0ec 4px, #b8e2f4); }
  &:disabled { border-color: #b4b7b5; background: #eff1ef; }
  &:disabled:checked { background: radial-gradient(circle, #8b8f8d 0 2px, #eff1ef 4px); }
`;

const PushButton = styled.button<{ $w: number }>`
  width: ${(p) => p.$w}px;
  height: 20px;
  border: 1px solid ${line};
  border-radius: 1px;
  background: linear-gradient(#f4f6f4, #dcdfdc);
  color: #8b8f8d;
`;

const ButtonRow = styled.div`
  display: flex;
  gap: 4px;
`;

const LangCard = styled(Stack)`
  height: 335px;
  width: 208px;
  background: #e6eae7;
`;

const LangGroup = styled.div<{ $ruled?: boolean }>`
  padding: 11px 12px ${(p) => (p.$ruled ? 11 : 0)}px;
  ${(p) => p.$ruled && "border-bottom: 1px solid #9a9e9b;"}
`;

const Language = styled(Filter)`
  display: block;
  width: 184px;
  margin: 3px 0 0;
  padding: 0 4px;
  font-size: 12px;
`;

const Preview = styled.div`
  flex: 1;
  width: 184px;
  margin: 7px 12px 12px;
  border: 1px solid ${line};
`;

/* ---------- bottom bars ---------- */

const StatusBar = styled.footer`
  flex: none;
  display: flex;
  align-items: center;
  height: 29px;
  background: #1a1c1a;
  color: #f4f6f4;
`;

const ViewSwitch = styled.button`
  width: 85px;
  padding-left: 1px;
  text-align: left;
  color: #fff;
  font-size: 15px;
  font-weight: 600;
  line-height: 20px;
`;

const EditorTabs = styled.div`
  flex: 1;
  display: flex;
  gap: 3px;
`;

const EditorTab = styled.button<{ $on?: boolean }>`
  display: flex;
  align-items: center;
  gap: 5px;
  width: 113px;
  height: 20px;
  padding-left: 3px;
  background: ${(p) => (p.$on ? "#fdfefd" : "#bfc2bf")};
  font-weight: ${(p) => (p.$on ? 600 : 400)};
`;

const Ime = styled.div`
  display: flex;
  align-items: center;
  width: 151px;
  height: 29px;
  margin-right: 80px;
  gap: 12px;
  background: linear-gradient(90deg, transparent 14px, #fdfefd 14px);
`;

const Sogou = styled.span<{ $size: number }>`
  flex: none;
  width: ${(p) => p.$size}px;
  height: ${(p) => p.$size}px;
  border-radius: 3px;
  background: #e2602c;
  color: #fff;
  font-family: "Open Sans", sans-serif;
  font-size: ${(p) => p.$size}px;
  font-weight: 800;
  line-height: ${(p) => p.$size - 1}px;
  text-align: center;
  rotate: -12deg;
`;

const ImeMode = styled.span`
  color: #1a6cc0;
  font-size: 16px;
  font-weight: 700;
  line-height: 20px;
`;

const StatusIcon = styled.span`
  display: flex;
  padding: 2px;
  margin-right: 6px;
  background: #c3c7c9;
`;

const StatusText = styled.div`
  display: flex;
  align-items: center;
  gap: 5px;
  width: 234px;
  height: 29px;
  padding-left: 4px;
  border-left: 1px solid #5a5e5c;
`;

const TaskBar = styled.footer`
  flex: none;
  display: flex;
  align-items: center;
  height: 47px;
  padding-left: 16px;
  background: #3c423d;
  color: #f0f2f0;
`;

const AppButton = styled.button<{ $run?: boolean; $on?: boolean }>`
  display: flex;
  flex: none;
  align-items: center;
  justify-content: center;
  width: 55px;
  height: 47px;
  padding-bottom: 2px;
  background: ${(p) => (p.$on ? "#656b67" : "none")};
  ${(p) => (p.$run || p.$on) && "box-shadow: inset 0 -2px 0 #86b4e0;"}
`;

const OneNote = styled.span`
  display: flex;
  align-items: center;
  width: 27px;
  height: 25px;
  background: linear-gradient(90deg, #7c2fa8 0 8px, #8a34b4 8px 18px, #c473e4 18px);
`;

const OneNoteLetter = styled.span`
  width: 15px;
  height: 15px;
  background: #6a2296;
  color: #fff;
  font-size: 11px;
  font-weight: 700;
  line-height: 15px;
  text-align: center;
`;

const Tia = styled.span`
  display: flex;
  flex-direction: column;
  width: 28px;
  height: 28px;
  background: #252c3c;
  color: #f4f6f4;
  font-size: 15px;
  line-height: 14px;
  text-align: left;
`;

const TiaVersion = styled.span`
  color: #a9bbe4;
  font-weight: 500;
`;

const Tray = styled.div`
  display: flex;
  align-items: center;
  gap: 11px;
  margin-left: auto;
`;

const TrayMode = styled.span`
  padding-right: 4px;
  font-size: 16px;
  line-height: 20px;
`;

const Clock = styled.time`
  display: block;
  width: 53px;
  height: 46px;
  padding-left: 10px;
  overflow: hidden;
  font-size: 15px;
  line-height: 22px;
`;

const ClockText = styled.span`
  display: block;
  width: 74px;
  text-align: center;
`;

/* ---------- data ---------- */

const menus = ["E)", "视图(V)", "插入(I)", "在线(O)", "选项(N)", "工具(T)", "窗口(W)", "帮助(H)"];

const leaves: { text: string; icon?: string; kind?: string }[] = [
  { text: "C_1 [CPU 1515F-2 PN]", kind: "head" },
  { text: "设备组态" },
  { text: "在线和诊断" },
  { text: "软件单元" },
  { text: "程序块" },
  { text: "添加新块", icon: "addBlock" },
  { text: "Main [OB1]", icon: "orgBlock" },
  { text: "数据块_1 [DB1]", icon: "db", kind: "sel" },
  { text: "MODBUS", icon: "folder" },
  { text: "RFID", icon: "folder" },
  { text: "安全", icon: "folder" },
  { text: "系统块", icon: "sysFolder" },
  { text: "工艺对象" },
  { text: "外部源文件" },
  { text: "PLC 变量" },
  { text: "显示所有变量", icon: "showTags" },
  { text: "添加新变量表", icon: "addBlock" },
  { text: "默认变量表 [50]", icon: "defaultTags" },
  { text: "PLC 数据类型" },
  { text: "监控与强制表" },
  { text: "在线备份" },
  { text: "Traces" },
  { text: "OPC UA 通信" },
  { text: "设备代理数据" },
  { text: "程序信息" },
  { text: "PLC 监控和报警" },
  { text: "PLC 报警文本列表" },
];

const blockWidths = [25, 19, 170, 120, 60, 100, 70, 80, 50, 70, 70, 63, 260];
const blockHeads = ["", "", "名称", "数据类型", "偏移量", "起始值", "保持", "从 HMI/OPC..", "从 H...", "在 HMI ...", "设定值", "监控", "注释", ""];
const members = [
  { name: "11", offset: "0.0" },
  { name: "22", offset: "0.1" },
  { name: "33", offset: "0.2" },
];
const accessColumns = ["保持", "从 HMI 可访问", "从 HMI 可写", "在 HMI 可见", "设定值"];

const msgWidths = [28, 199, 351, 50, 51, 54, 70, 80];
const msgHeads = ["!", "路径", "描述", "转至", "?", "错误", "警告", "时间", ""];

const light = "#ecf0ed";
const blanks = (n: number) => Array.from({ length: n }, (_, i) => i);
const Cols = ({ widths }: { widths: number[] }) => (
  <colgroup>
    {widths.map((w, i) => (
      <col key={i} width={w} />
    ))}
    <col />
  </colgroup>
);
const Tools = ({ names }: { names: string[] }) => (
  <>
    {names.map((n) => (
      <Tool key={n} aria-label={n}>
        <Icon name={n} />
      </Tool>
    ))}
  </>
);

/* ---------- sections ---------- */

const CommandArea = () => (
  <Commands>
    <div>
      <MenuBar>
        {menus.map((m) => (
          <MenuItem key={m}>{m}</MenuItem>
        ))}
      </MenuBar>
      <MainTools>
        <TextTool>存项目</TextTool>
        <Sep />
        <Tools names={["printer"]} />
        <Sep />
        <Tools names={["cut", "copy", "paste", "remove"]} />
        <Sep />
        <Tools names={["undo"]} />
        <Tool $slim aria-label="undo list"><Icon name="drop" size={14} /></Tool>
        <Tools names={["redo"]} />
        <Tool $slim aria-label="redo list"><Icon name="dropOff" size={14} /></Tool>
        <Sep />
        <Tools names={["compile", "download", "upload", "monitor", "runtime"]} />
        <Sep />
        <TextTool><Icon name="online" />转至在线</TextTool>
        <TextTool $off><Icon name="offline" />转至离线</TextTool>
        <Sep />
        <Tools names={["devices", "start", "stop"]} />
        <Sep />
        <Tools names={["crossRef"]} />
        <Sep />
        <Tools names={["splitH", "splitV"]} />
        <Sep />
        <Search placeholder="<在项目中搜索>" aria-label="在项目中搜索" />
        <Tools names={["find"]} />
      </MainTools>
    </div>
    <Brand>Totally Integrated Automation</Brand>
  </Commands>
);

const ProjectColumn = () => (
  <LeftColumn>
    <Stack $fill>
      <PanelHead>
        <Push />
        <WindowTools $gap={6}>
          <HeadTool aria-label="columns"><Icon name="columns" size={13} /></HeadTool>
          <HeadTool aria-label="collapse"><Icon name="caretLeft" size={14} /></HeadTool>
        </WindowTools>
      </PanelHead>
      <Strip />
      <ToolStrip $end>
        <Sep />
        <Tool $on aria-label="list"><Icon name="listView" /></Tool>
        <Tools names={["exportTable"]} />
      </ToolStrip>
      <Spacer />
      <TreeArea>
        <Tree>
          {leaves.map((l) => (
            <Leaf key={l.text} $kind={l.kind}>
              <LeafText $sel={l.kind === "sel"} $head={l.kind === "head"} $icon={!!l.icon}>
                {l.icon && <Icon name={l.icon} />}
                {l.text}
              </LeafText>
            </Leaf>
          ))}
        </Tree>
        <VTrack>
          <ScrollButton aria-label="up"><Icon name="chevUp" size={14} /></ScrollButton>
          <VThumb><Icon name="gripV" /></VThumb>
          <Push />
          <ScrollButton aria-label="down"><Icon name="chevDown" size={14} /></ScrollButton>
        </VTrack>
      </TreeArea>
    </Stack>
    <Bar>目</Bar>
    <Details>
      <Bar $ruled>图</Bar>
      <Strip />
      <ToolStrip />
      <Sheet $bg={light}>
        <Grid>
          <Cols widths={[107, 80]} />
          <thead>
            <tr>
              <Th />
              <Th>偏移量</Th>
              <Th>...</Th>
            </tr>
          </thead>
          <tbody>
            {members.map((m, i) => (
              <tr key={m.name}>
                <DetailCell $sel={i === 0} $focus={i === 0} />
                <DetailCell $sel={i === 0}>{m.offset}</DetailCell>
                <DetailCell $sel={i === 0}>B...</DetailCell>
              </tr>
            ))}
            {blanks(8).map((i) => (
              <tr key={i}>
                <DetailCell colSpan={3} />
              </tr>
            ))}
          </tbody>
        </Grid>
      </Sheet>
      <HTrack>
        <HThumb $width={143} $grip={37}><Icon name="gripH" /></HThumb>
        <Push />
        <ScrollButton aria-label="right"><Icon name="chevRight" size={14} /></ScrollButton>
      </HTrack>
    </Details>
  </LeftColumn>
);

const BlockTable = () => (
  <Sheet $bg="#dfe1df">
    <Grid>
      <Cols widths={blockWidths} />
      <thead>
        <tr>
          {blockHeads.map((h, i) => (
            <Th key={i}>{h}</Th>
          ))}
        </tr>
      </thead>
      <tbody>
        <tr>
          <Td $bg="#c9ccc9" $dim>1</Td>
          <Td $center><Icon name="tag" /></Td>
          <Td>
            <CellLine><Icon name="open" size={10} /><Indent $w={4}>Static</Indent></CellLine>
          </Td>
          <Td /><Td /><Td />
          {accessColumns.map((c) => (
            <Td key={c} $center><Check type="checkbox" disabled aria-label={c} /></Td>
          ))}
          <Td /><Td /><Td />
        </tr>
        {members.map((m, i) => (
          <tr key={m.name}>
            <Td $bg={i === 0 ? "#b9c7d0" : "#c9ccc9"} $dim>{i + 2}</Td>
            <Td $center $bg={light}><Icon name="tag" /></Td>
            <Td $center>
              <CellLine><Icon name="item" /><Indent $w={20}>{m.name}</Indent></CellLine>
            </Td>
            <Td $bg={light}>
              <CellLine $between>
                Bool
                {i === 0 && <Pick aria-label="type list"><Icon name="picker" size={14} /></Pick>}
              </CellLine>
            </Td>
            <Td $focus={i === 0}>{m.offset}</Td>
            <Td $bg={light} $dim>false</Td>
            {accessColumns.map((c, k) => (
              <Td key={c} $center $bg={light}>
                <Check type="checkbox" defaultChecked={k > 0 && k < 4} aria-label={`${c} ${m.name}`} />
              </Td>
            ))}
            <Td />
            <Td $bg={light} />
            <Td />
          </tr>
        ))}
        {blanks(20).map((i) => (
          <tr key={i}>
            {blockHeads.map((_, k) => (
              <Td key={k} $bg={k === 0 ? "#c9ccc9" : k === 1 ? "#e3e5e3" : undefined} />
            ))}
          </tr>
        ))}
      </tbody>
    </Grid>
  </Sheet>
);

const InspectorPane = () => (
  <Inspector>
    <InspectorHead>
      <Push />
      <TabRow>
        <Tab $w={75}><Icon name="properties" />属性</Tab>
        <Tab $w={81} $on><Icon name="infoDoc" />信息<Push /><Icon name="infoYellow" size={14} /></Tab>
        <Tab $w={75}><Icon name="diagnose" />诊断</Tab>
      </TabRow>
      <TabGap $w={18} />
      <WindowTools $gap={4}>
        <HeadTool aria-label="restore"><Icon name="restore" size={14} /></HeadTool>
        <HeadTool aria-label="split"><Icon name="lines" size={14} /></HeadTool>
        <HeadTool aria-label="collapse"><Icon name="caretDown" size={14} /></HeadTool>
      </WindowTools>
    </InspectorHead>
    <Strip>
      <SubTabs>
        <SubTab $w={71}>常规<Icon name="infoYellow" size={14} /></SubTab>
        <SubTab $w={95}>交叉引用</SubTab>
        <SubTab $w={63} $on>编译</SubTab>
        <SubTab $w={63}>语法</SubTab>
      </SubTabs>
    </Strip>
    <ToolStrip $inset>
      <Row>
        <Tool $on aria-label="errors"><Icon name="error" /></Tool>
        <Tools names={["warning", "info"]} />
      </Row>
      <Filter aria-label="消息过滤" defaultValue="all">
        <option value="all">显示所有消息</option>
      </Filter>
    </ToolStrip>
    <Message>
      编译完成（错误<Mid>：</Mid>0<Mid>；</Mid>警告<Mid>：</Mid>0） - 没有符合过滤条件的消息<Mid>。</Mid>
    </Message>
    <Sheet $bg={light}>
      <Grid>
        <Cols widths={msgWidths} />
        <thead>
          <tr>
            {msgHeads.map((h, i) => (
              <Th key={i}>{h}</Th>
            ))}
          </tr>
        </thead>
        <tbody>
          {blanks(13).map((i) => (
            <tr key={i}>
              <DetailCell colSpan={9} />
            </tr>
          ))}
        </tbody>
      </Grid>
    </Sheet>
  </Inspector>
);

const EditorColumn = () => (
  <Column>
    <PanelHead $main>
      <Crumbs>
        <Crumb href="#project">TEST_V1.0</Crumb>
        <Icon name="crumb" size={14} />
        <Crumb href="#plc">PLC_1 [CPU 1515F-2 PN]</Crumb>
        <Icon name="crumb" size={14} />
        <Crumb href="#blocks">程序块</Crumb>
        <Icon name="crumb" size={14} />
        <Crumb href="#db1">数据块_1 [DB1]</Crumb>
      </Crumbs>
      <Push />
      <WindowTools $gap={4}>
        <HeadTool aria-label="minimize"><Icon name="min" size={14} /></HeadTool>
        <HeadTool aria-label="restore"><Icon name="restore" size={14} /></HeadTool>
        <HeadTool aria-label="maximize"><Icon name="max" size={14} /></HeadTool>
        <HeadTool aria-label="close"><Icon name="close" size={14} /></HeadTool>
      </WindowTools>
    </PanelHead>
    <Strip />
    <ToolStrip>
      <Tools names={["addRow", "insertRow"]} />
      <Sep />
      <Tools names={["resetDb", "checkDb", "expand"]} />
      <Sep />
      <Tools names={["glasses"]} />
      <Sep />
      <ToolLabel>保持实际值</ToolLabel>
      <Tools names={["lockDb"]} />
      <Sep />
      <ToolLabel>快照</ToolLabel>
      <Tools names={["snapUp", "snapDown"]} />
      <Sep />
      <ToolLabel>将快照值复制到起始值中</ToolLabel>
      <Tools names={["copyAll", "copySome"]} />
      <Sep />
      <ToolLabel>将起始值加载为实际值</ToolLabel>
      <Tools names={["loadAll", "loadSome"]} />
      <Push />
      <Tools names={["keepLayout"]} />
      <TabGap $w={12} />
    </ToolStrip>
    <BlockTitle>数据块_1</BlockTitle>
    <BlockTable />
    <InspectorPane />
  </Column>
);

const findOptions = [
  { text: "全字匹配" },
  { text: "区分大小写" },
  { text: "在子结构中查找", off: true },
  { text: "在隐藏文本中查找", off: true, on: true },
  { text: "使用通配符", off: true },
  { text: "使用正则表达式", off: true },
];

const TaskColumn = () => (
  <Column>
    <PanelHead>任务</PanelHead>
    <OptionsHead>选项</OptionsHead>
    <ToolStrip />
    <Fold><FoldMark><Icon name="chevDown" /></FoldMark>查找和替换</Fold>
    <FindCard>
      <FieldLabel htmlFor="find">查找<Mid>：</Mid></FieldLabel>
      <Field id="find" />
      <Options $top={6} $bottom={8}>
        {findOptions.map((o) => (
          <Option key={o.text} $off={o.off}>
            <Check type="checkbox" disabled={o.off} defaultChecked={o.on} />
            {o.text}
          </Option>
        ))}
      </Options>
      <Options $top={0} $bottom={2}>
        <Option><Radio type="radio" name="dir" defaultChecked />向下</Option>
        <Option><Radio type="radio" name="dir" />向上</Option>
      </Options>
      <PushButton $w={184} type="button">查找</PushButton>
      <Options $top={16} $bottom={0}>
        <FieldLabel htmlFor="replace">替换为<Mid>：</Mid></FieldLabel>
        <Field id="replace" />
      </Options>
      <Options $top={4} $bottom={3}>
        <Option $off><Radio type="radio" name="scope" disabled defaultChecked />整个文档</Option>
        <Option $off><Radio type="radio" name="scope" disabled />从当前位置开始</Option>
        <Option $off><Radio type="radio" name="scope" disabled />选择</Option>
      </Options>
      <ButtonRow>
        <PushButton $w={90} type="button">替换</PushButton>
        <PushButton $w={90} type="button">全部替换</PushButton>
      </ButtonRow>
    </FindCard>
    <HTrack>
      <ScrollButton aria-label="left"><Icon name="chevLeft" size={14} /></ScrollButton>
      <HThumb $grip={36}><Icon name="gripH" /></HThumb>
    </HTrack>
    <Fold><FoldMark><Icon name="chevDown" /></FoldMark>语言和资源</Fold>
    <LangCard>
      <LangGroup $ruled>
        <FieldLabel htmlFor="edit-lang">编辑语言<Mid>：</Mid></FieldLabel>
        <Language id="edit-lang"><option>中文（中华人民共和国）</option></Language>
      </LangGroup>
      <LangGroup>
        <FieldLabel htmlFor="ref-lang">参考语言<Mid>：</Mid></FieldLabel>
        <Language id="ref-lang"><option>中文（中华人民共和国）</option></Language>
      </LangGroup>
      <Preview />
    </LangCard>
    <HTrack>
      <ScrollButton aria-label="left"><Icon name="chevLeft" size={14} /></ScrollButton>
      <HThumb $grip={45}><Icon name="gripH" /></HThumb>
    </HTrack>
  </Column>
);

export default function App() {
  return (
    <Window>
      <GlobalStyle />
      <TitleBar>F:\05--志文OK\桌面文件\TIA测试\TEST_V1.0\TEST_V1.0</TitleBar>
      <CommandArea />
      <Work>
        <ProjectColumn />
        <EditorColumn />
        <TaskColumn />
      </Work>
      <StatusBar>
        <ViewSwitch>视图</ViewSwitch>
        <EditorTabs>
          <EditorTab><Icon name="overview" />总览</EditorTab>
          <EditorTab><Icon name="network" />PLC_2</EditorTab>
          <EditorTab $on><Icon name="db" />数据块_1 (D...</EditorTab>
        </EditorTabs>
        <Ime>
          <Sogou $size={33}>S</Sogou>
          <ImeMode>中</ImeMode>
          <Icon name="moon" />
          <Icon name="punct" />
          <Icon name="keyboard" size={18} />
        </Ime>
        <StatusIcon><Icon name="statusDoc" /></StatusIcon>
        <StatusText>
          <Icon name="ok" size={14} />
          <span>项目 TEST_V1.0 已打开<Mid>。</Mid></span>
        </StatusText>
      </StatusBar>
      <TaskBar>
        <AppButton aria-label="task view"><Icon name="taskView" size={20} /></AppButton>
        <AppButton aria-label="chat"><Icon name="wechat" size={28} /></AppButton>
        <AppButton aria-label="browser"><Icon name="compass" size={28} /></AppButton>
        <AppButton><OneNote><OneNoteLetter>N</OneNoteLetter></OneNote></AppButton>
        <AppButton aria-label="to do"><Icon name="todo" size={28} /></AppButton>
        <AppButton $run aria-label="clover"><Icon name="clover" size={28} /></AppButton>
        <AppButton aria-label="pinwheel"><Icon name="pinwheel" size={28} /></AppButton>
        <AppButton $on><Tia>TIA<TiaVersion>V16</TiaVersion></Tia></AppButton>
        <AppButton $run aria-label="recorder"><Icon name="recorder" size={28} /></AppButton>
        <Tray>
          <Icon name="trayUp" />
          <Icon name="battery" size={18} />
          <Icon name="wifi" />
          <Icon name="sound" size={18} />
          <TrayMode>中</TrayMode>
          <Sogou $size={16}>S</Sogou>
          <Clock>
            <ClockText>9:06</ClockText>
            <ClockText>2022/4/21</ClockText>
          </Clock>
        </Tray>
      </TaskBar>
    </Window>
  );
}
